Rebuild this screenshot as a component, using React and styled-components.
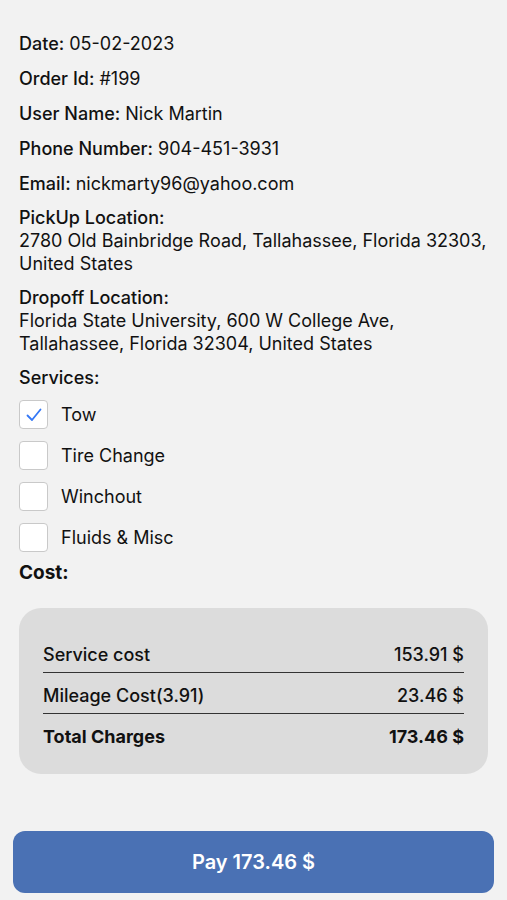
import React from "react";
import styled, { createGlobalStyle } from "styled-components";

const Global = createGlobalStyle`
  html, body {
    margin: 0;
    padding: 0;
    background: #f2f2f2;
  }
  body {
    font-family: Inter, "Noto Sans", "Liberation Sans", sans-serif;
    color: #111;
  }
`;

const Page = styled.div`
  width: 507px;
  min-height: 900px;
  box-sizing: border-box;
  padding: 33px 19px 8px;
  display: flex;
  flex-direction: column;
`;

const InfoLine = styled.div`
  font-size: 18px;
  line-height: 22px;
  margin-bottom: 13px;

  &:nth-child(5) {
    margin-bottom: 11px;
  }
`;

const Label = styled.span`
  font-weight: 500;
`;

const Block = styled.div`
  font-size: 18px;
  line-height: 23px;
  margin-bottom: 11px;
`;

const BlockLabel = styled.div`
  font-weight: 500;
`;

const Services = styled.div`
  display: flex;
  flex-direction: column;
  gap: 12px;
  margin-bottom: 9px;
`;

const CheckRow = styled.label`
  display: flex;
  align-items: center;
  gap: 13px;
  font-size: 18px;
  height: 29px;
`;

const Box = styled.span`
  width: 29px;
  height: 29px;
  box-sizing: border-box;
  background: #fff;
  border: 1px solid #c9c9c9;
  border-radius: 4px;
  display: flex;
  align-items: center;
  justify-content: center;
`;

const CostTitle = styled.div`
  font-size: 19px;
  line-height: 23px;
  font-weight: 700;
  margin-bottom: 24px;
`;

const Card = styled.div`
  background: #dcdcdc;
  border-radius: 22px;
  padding: 24px 24px 26px;
  display: flex;
  flex-direction: column;
`;

const CostRow = styled.div`
  display: flex;
  justify-content: space-between;
  font-size: 18px;
  line-height: 22px;
  font-weight: ${(p) => (p.$total ? 700 : 500)};
  padding: 12px 0 ${(p) => (p.$total ? "0" : "6px")};
  border-bottom: ${(p) => (p.$total ? "none" : "1.5px solid #333")};
`;

const PayButton = styled.button`
  margin: 57px -6px 0;
  height: 62px;
  border: none;
  border-radius: 12px;
  background: #4a71b4;
  color: #fff;
  font-family: inherit;
  font-size: 20px;
  font-weight: 600;
`;

const Check = ({ on }) => (
  <Box>
    {on && (
      <svg width="20" height="20" viewBox="0 0 20 20">
        <path d="M3.5 10.5 L8 15 L16.5 4.5" fill="none" stroke="#3478f6" strokeWidth="1.8" strokeLinecap="round" strokeLinejoin="round" />
      </svg>
    )}
  </Box>
);

const info = [
  ["Date:", "05-02-2023"],
  ["Order Id:", "#199"],
  ["User Name:", "Nick Martin"],
  ["Phone Number:", "904-451-3931"],
  ["Email:", "nickmarty96@yahoo.com"],
];

const services = [
  ["Tow", true],
  ["Tire Change", false],
  ["Winchout", false],
  ["Fluids & Misc", false],
];

export default function App() {
  return (
    <Page>
      <Global />
      {info.map(([k, v]) => (
        <InfoLine key={k}>
          <Label>{k}</Label> {v}
        </InfoLine>
      ))}
      <Block>
        <BlockLabel>PickUp Location:</BlockLabel>
        <div>2780 Old Bainbridge Road, Tallahassee, Florida 32303,</div>
        <div>United States</div>
      </Block>
      <Block>
        <BlockLabel>Dropoff Location:</BlockLabel>
        <div>Florida State University, 600 W College Ave,</div>
        <div>Tallahassee, Florida 32304, United States</div>
      </Block>
      <Block>
        <BlockLabel>Services:</BlockLabel>
      </Block>
      <Services>
        {services.map(([name, on]) => (
          <CheckRow key={name}>
            <Check on={on} />
            {name}
          </CheckRow>
        ))}
      </Services>
      <CostTitle>Cost:</CostTitle>
      <Card>
        <CostRow>
          <span>Service cost</span>
          <span>153.91 $</span>
        </CostRow>
        <CostRow>
          <span>Mileage Cost(3.91)</span>
          <span>23.46 $</span>
        </CostRow>
        <CostRow $total>
          <span>Total Charges</span>
          <span>173.46 $</span>
        </CostRow>
      </Card>
      <PayButton>Pay 173.46 $</PayButton>
    </Page>
  );
}
